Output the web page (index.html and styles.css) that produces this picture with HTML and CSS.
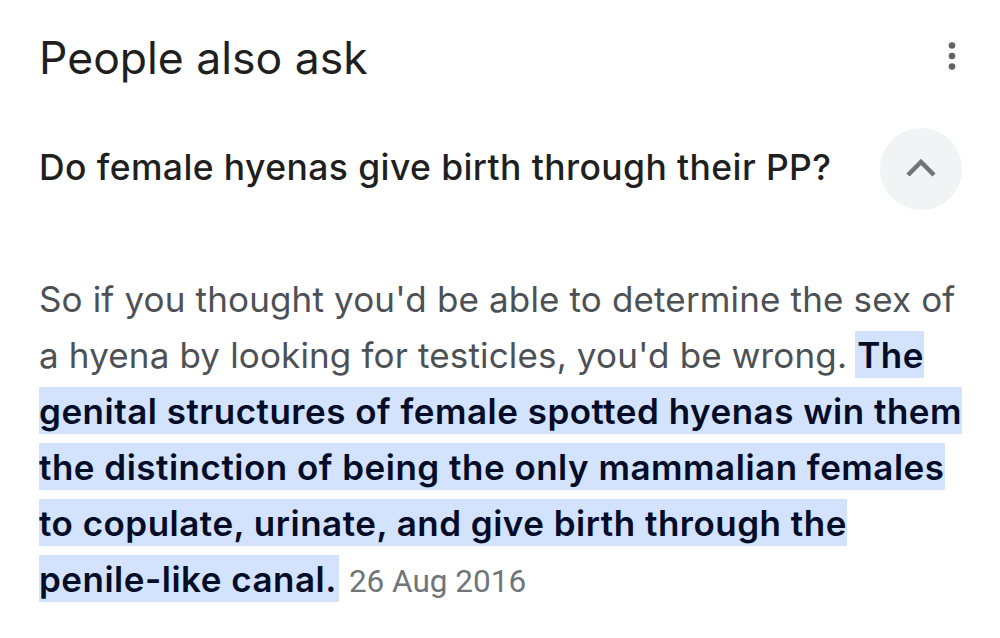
FILE: index.html
```html
<!DOCTYPE html>
<html>
<head>
<meta charset="utf-8">
<link rel="stylesheet" href="styles.css">
</head>
<body>
<div class="paa">
  <div class="head">
    <h2 class="title">People also ask</h2>
    <svg class="more" width="14" height="36" viewBox="0 0 14 36"><circle cx="7" cy="7.5" r="3.3"/><circle cx="7" cy="18" r="3.3"/><circle cx="7" cy="28.5" r="3.3"/></svg>
  </div>
  <div class="q">
    <div class="qtext">Do female hyenas give birth through their PP?</div>
    <div class="btn"><svg width="30" height="20" viewBox="0 0 30 20"><polyline points="2,17 15,4 28,17" fill="none" stroke="#70757a" stroke-width="4.5"/></svg></div>
  </div>
  <p class="ans">So if you thought you'd be able to determine the sex of<br>a hyena by looking for testicles, you'd be wrong. <b class="hl">The<br>genital structures of female spotted hyenas win them<br>the distinction of being the only mammalian females<br>to copulate, urinate, and give birth through the<br>penile-like canal.</b> <span class="date">26 Aug 2016</span></p>
</div>
</body>
</html>
```
FILE: styles.css
```css
html, body { margin: 0; padding: 0; background: #fff; }
body { font-family: Inter, "Open Sans", sans-serif; }
.paa { width: 1000px; height: 638px; box-sizing: border-box; padding: 28px 37px 0 39px; overflow: hidden; }
.head { display: flex; justify-content: space-between; align-items: flex-start; }
.title { margin: 0; font-size: 44.5px; font-weight: 400; line-height: 60px; color: #1f1f1f; }
.more { fill: #5f6368; margin-top: 10px; margin-right: 4px; }
.q { display: flex; justify-content: space-between; align-items: center; margin-top: 40px; }
.qtext { font-size: 35.5px; font-weight: 500; line-height: 44px; color: #1f1f1f; margin-top: -3px; letter-spacing: 0.4px; }
.btn { width: 82px; height: 82px; border-radius: 50%; background: #f1f3f4; display: flex; align-items: center; justify-content: center; margin-right: 1px; }
.btn svg { margin-top: -3px; }
.ans { margin: 61px 0 0 0; font-size: 35px; line-height: 56px; color: #4d5156; letter-spacing: 0.15px; }
.hl { font-weight: 600; color: #040c28; background: #d3e3fd; padding: 3px 2px 2px; margin: 0 -2px; letter-spacing: 0.5px; }
.date { font-family: Roboto, sans-serif; font-size: 31.5px; color: #70757a; margin-left: 2px; letter-spacing: 0; }
```
